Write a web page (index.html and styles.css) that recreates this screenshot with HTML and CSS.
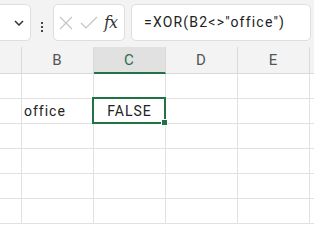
FILE: index.html
```html
<!DOCTYPE html>
<html>
<head>
	<meta charset="utf-8">
	<title>XOR</title>
	<link rel="stylesheet" href="styles.css">
</head>
<body>
	<div class="sheet">

		<!-- Formula bar -->
		<div class="toolbar">
			<div class="name-box">
				<svg class="chevron" width="10" height="6" viewBox="0 0 10 6"><path d="M1 1l4 4 4-4" fill="none" stroke="#333" stroke-width="1.5"/></svg>
			</div>
			<div class="dots"><span></span><span></span><span></span></div>
			<div class="fx-box">
				<svg width="16" height="16" viewBox="0 0 16 16"><path d="M2 2l12 12M14 2L2 14" stroke="#c4c4c4" stroke-width="1.2"/></svg>
				<svg width="18" height="14" viewBox="0 0 18 14"><path d="M1 7l5 5L17 1" fill="none" stroke="#c4c4c4" stroke-width="1.2"/></svg>
				<span class="fx">fx</span>
			</div>
			<div class="formula">=XOR(B2&lt;&gt;"office")</div>
		</div>

		<!-- Grid -->
		<div class="grid">
			<div class="cell head corner"></div>
			<div class="cell head">B</div>
			<div class="cell head active">C</div>
			<div class="cell head">D</div>
			<div class="cell head">E</div>
			<div class="cell head last"></div>

			<div class="cell row-num"></div><div class="cell"></div><div class="cell"></div><div class="cell"></div><div class="cell"></div><div class="cell last"></div>

			<div class="cell row-num"></div>
			<div class="cell text">office</div>
			<div class="cell selected">FALSE<i class="handle"></i></div>
			<div class="cell"></div>
			<div class="cell"></div>
			<div class="cell last"></div>

			<div class="cell row-num"></div><div class="cell"></div><div class="cell"></div><div class="cell"></div><div class="cell"></div><div class="cell last"></div>
			<div class="cell row-num"></div><div class="cell"></div><div class="cell"></div><div class="cell"></div><div class="cell"></div><div class="cell last"></div>
			<div class="cell row-num"></div><div class="cell"></div><div class="cell"></div><div class="cell"></div><div class="cell"></div><div class="cell last"></div>
			<div class="cell row-num"></div><div class="cell"></div><div class="cell"></div><div class="cell"></div><div class="cell"></div><div class="cell last"></div>
		</div>
	</div>
</body>
</html>
```

FILE: styles.css
```css
* {
	box-sizing: border-box;
}

body {
	margin: 0;
	background: #fff;
	font-family: Roboto, "Noto Sans", sans-serif;
}

.sheet {
	width: 314px;
	height: 241px;
	overflow: hidden;
}

/* Formula bar */
.toolbar {
	height: 47px;
	background: #f3f3f3;
	display: flex;
	align-items: flex-start;
	padding-top: 4px;
}

.name-box, .fx-box, .formula {
	height: 37px;
	background: #fff;
	border: 1px solid #dedede;
	border-radius: 5px;
}

.name-box {
	width: 41px;
	margin-left: -10px;
	display: flex;
	align-items: center;
	justify-content: flex-end;
	padding-right: 6px;
}

.dots {
	width: 22px;
	display: flex;
	flex-direction: column;
	align-items: center;
	gap: 2px;
	padding-top: 18px;
}

.dots span {
	width: 2px;
	height: 2px;
	background: #444;
}

.fx-box {
	width: 72px;
	display: flex;
	align-items: center;
	gap: 6px;
	padding-left: 4px;
}

.fx {
	font-family: "DejaVu Serif", serif;
	font-style: italic;
	font-size: 16px;
	color: #333;
	letter-spacing: -1px;
}

.formula {
	width: 180px;
	margin-left: 6px;
	padding-left: 12px;
	line-height: 35px;
	font-size: 14px;
	letter-spacing: 1.2px;
	color: #222;
	white-space: nowrap;
}

/* Grid */
.grid {
	display: grid;
	grid-template-columns: 22px 72px 72px 72px 72px 20px;
	grid-template-rows: 27px;
	grid-auto-rows: 25px;
}

.cell {
	border-right: 1px solid #e1e1e1;
	border-bottom: 1px solid #e1e1e1;
	font-size: 14px;
	letter-spacing: 1px;
	color: #222;
	position: relative;
}

.cell.last {
	border-right: none;
}

.head {
	background: #f3f3f3;
	border-color: #d9d9d9;
	font-size: 15px;
	color: #555;
	display: flex;
	align-items: center;
	justify-content: center;
}

.head.active {
	background: #e1e1e1;
	color: #2b6e4b;
	border-bottom: 2px solid #217346;
}

.text {
	padding-left: 2px;
	line-height: 24px;
}

.selected {
	display: flex;
	align-items: center;
	justify-content: center;
}

.selected::after {
	content: "";
	position: absolute;
	left: -2px;
	top: -2px;
	right: -1px;
	bottom: -1px;
	border: 2px solid #217346;
}

.handle {
	position: absolute;
	right: -3px;
	bottom: -3px;
	width: 5px;
	height: 5px;
	background: #217346;
	border: 1px solid #fff;
	box-sizing: content-box;
	z-index: 2;
}
```
